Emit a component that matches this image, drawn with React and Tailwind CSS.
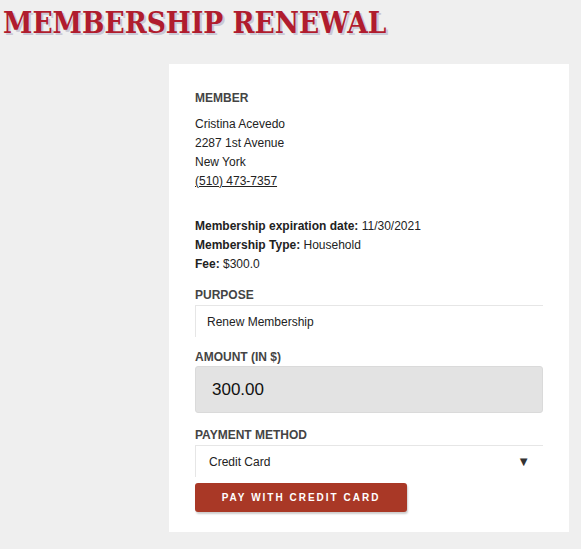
import React from 'react';

const sans = { fontFamily: '"Liberation Sans", Arial, sans-serif' };

function Label({ children, className = '' }) {
  return <div className={`text-[12px] font-bold text-[#444] uppercase leading-[14px] ${className}`}>{children}</div>;
}

export default function App() {
  return (
    <div className="min-h-[549px] bg-[#efefef] pb-4" style={sans}>
      <h1
        className="pl-[3px] pt-[6px] text-[29.5px] leading-[34px] font-bold text-[#b01c2e] [text-shadow:2px_2px_0_#c9c9d6]"
        style={{ fontFamily: '"DejaVu Serif Condensed", "DejaVu Serif", serif' }}
      >
        MEMBERSHIP RENEWAL
      </h1>

      <div className="ml-[169px] mt-[24px] w-[400px] bg-white px-[26px] pt-[27px] pb-[20px] text-[12px] text-[#222]">
        <Label>MEMBER</Label>
        <div className="mt-[10px] leading-[19px]">
          <div>Cristina Acevedo</div>
          <div>2287 1st Avenue</div>
          <div>New York</div>
          <div><a className="underline" href="#">(510) 473-7357</a></div>
        </div>

        <div className="mt-[26px] leading-[19px]">
          <div><b>Membership expiration date:</b> 11/30/2021</div>
          <div><b>Membership Type:</b> Household</div>
          <div><b>Fee:</b> $300.0</div>
        </div>

        <Label className="mt-[14px]">PURPOSE</Label>
        <div className="mt-[3px] h-[32px] border-t border-l border-[#e6e6e6] pl-[11px] flex items-center text-[12px]">
          Renew Membership
        </div>

        <Label className="mt-[13px]">AMOUNT (IN $)</Label>
        <div className="mt-[2px] h-[47px] rounded-[3px] bg-[#e3e3e3] border border-[#dadada] pl-[16px] flex items-center text-[17px] text-[#111]">
          300.00
        </div>

        <Label className="mt-[15px]">PAYMENT METHOD</Label>
        <div className="mt-[3px] h-[32px] border-t border-l border-[#e6e6e6] pl-[13px] pr-[13px] flex items-center justify-between text-[12px]">
          <span>Credit Card</span>
          <span className="text-[13px] text-[#333]">▼</span>
        </div>

        <button className="mt-[6px] h-[29px] w-[212px] rounded-[3px] bg-[#a93826] text-white text-[10px] font-bold tracking-[2px] shadow-[1px_2px_2px_rgba(0,0,0,0.2)]">
          PAY WITH CREDIT CARD
        </button>
      </div>
    </div>
  );
}
